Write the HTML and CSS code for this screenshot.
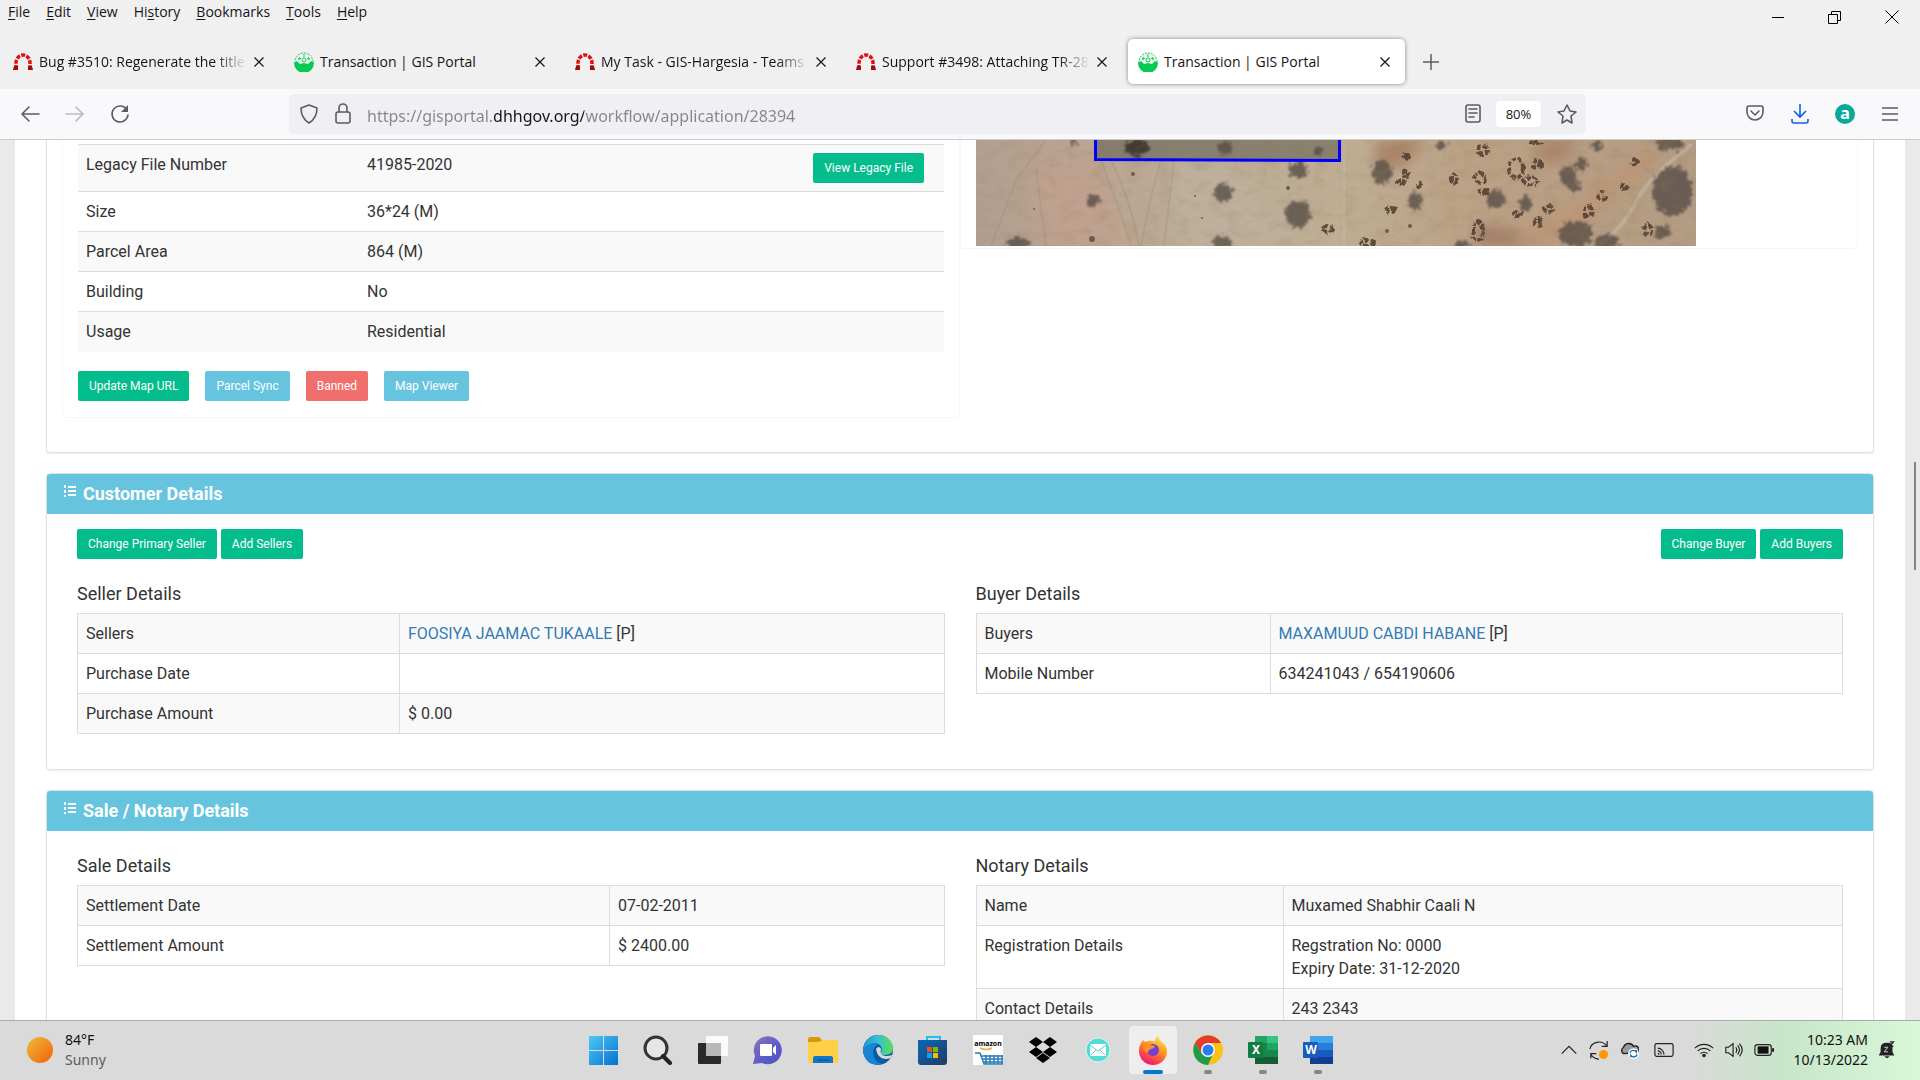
FILE: index.html
```html
<!DOCTYPE html>
<html lang="en">
<head>
    <meta charset="utf-8">
    <meta name="viewport" content="width=device-width, initial-scale=1.0">
    <title>Transaction | GIS Portal</title>
    <link rel="stylesheet" href="styles.css">
</head>
<body>
    <svg class="defs" aria-hidden="true">
        <symbol id="redmine" viewBox="0 0 20 20">
            <path d="M3 17V11A7 8 0 0 1 17 11V17" fill="none" stroke="#d11" stroke-width="3.500" stroke-dasharray="4 1.300"/>
            <path d="M1 14h4v4H0zM15 14h4l1 4h-5z" fill="#a30c0c"/>
        </symbol>
        <symbol id="portal" viewBox="0 0 20 20">
            <circle cx="10" cy="10" r="9" fill="#eafaf0" stroke="#19c65b" stroke-dasharray="2 1"/>
            <path d="M5 5l2 2M15 5l-2 2M10 2v3" stroke="#19c65b" fill="none"/>
            <circle cx="10" cy="8" r="2" fill="none" stroke="#19c65b"/>
            <circle cx="5" cy="7" r="1" fill="#19c65b"/>
            <circle cx="15" cy="7" r="1" fill="#19c65b"/>
            <path d="M0 11l3-2 3 3 4-1 4 1 3-3 3 2a10 10 0 0 1-20 0z" fill="#08ca52"/>
        </symbol>
        <symbol id="close" viewBox="0 0 12 12">
            <path d="M1.500 1.500l9 9m0-9l-9 9" stroke="currentColor" stroke-width="1.200"/>
        </symbol>
        <symbol id="list" viewBox="0 0 12 12">
            <path d="M0 0h2v3H0zM0 5h2v3H0zM0 10h2v2H0zM4 1h8v2H4zM4 5h8v2H4zM4 9h8v2H4z" fill="#fff"/>
        </symbol>
    </svg>

    <header class="chrome">
        <div class="titlebar">
            <nav class="menubar">
                <button><u>F</u>ile</button>
                <button><u>E</u>dit</button>
                <button><u>V</u>iew</button>
                <button>Hi<u>s</u>tory</button>
                <button><u>B</u>ookmarks</button>
                <button><u>T</u>ools</button>
                <button><u>H</u>elp</button>
            </nav>
            <div class="winbuttons">
                <button aria-label="Minimize"><svg width="12" height="12"><path d="M0 6.500h12" stroke="#000"/></svg></button>
                <button aria-label="Restore"><svg width="13" height="13"><path d="M.5 3.500h9v9h-9zM3.500 3V.5h9v9H10" fill="none" stroke="#000"/></svg></button>
                <button aria-label="Close"><svg width="14" height="14"><path d="M.5.5l13 13m0-13l-13 13" stroke="#000"/></svg></button>
            </div>
        </div>
        <div class="tabs">
            <div class="tab">
                <svg class="favicon"><use href="#redmine"/></svg>
                <span class="tabtitle fade">Bug #3510: Regenerate the title</span>
                <button class="tabclose" aria-label="Close tab"><svg><use href="#close"/></svg></button>
            </div>
            <div class="tab">
                <svg class="favicon"><use href="#portal"/></svg>
                <span class="tabtitle">Transaction | GIS Portal</span>
                <button class="tabclose" aria-label="Close tab"><svg><use href="#close"/></svg></button>
            </div>
            <div class="tab">
                <svg class="favicon"><use href="#redmine"/></svg>
                <span class="tabtitle fade">My Task - GIS-Hargesia - Teams</span>
                <button class="tabclose" aria-label="Close tab"><svg><use href="#close"/></svg></button>
            </div>
            <div class="tab">
                <svg class="favicon"><use href="#redmine"/></svg>
                <span class="tabtitle fade">Support #3498: Attaching TR-28</span>
                <button class="tabclose" aria-label="Close tab"><svg><use href="#close"/></svg></button>
            </div>
            <div class="tab active">
                <svg class="favicon"><use href="#portal"/></svg>
                <span class="tabtitle">Transaction | GIS Portal</span>
                <button class="tabclose" aria-label="Close tab"><svg><use href="#close"/></svg></button>
            </div>
            <button class="newtab" aria-label="New tab"><svg width="16" height="16"><path d="M8 0v16M0 8h16" stroke="#5b5b66" stroke-width="1.500"/></svg></button>
        </div>
        <div class="toolbar">
            <div class="navbuttons">
                <button aria-label="Back"><svg width="20" height="20" viewBox="0 0 20 20"><path d="M19 10H2M9 3l-7 7 7 7" class="line"/></svg></button>
                <button aria-label="Forward" class="disabled"><svg width="20" height="20" viewBox="0 0 20 20"><path d="M1 10h17M11 3l7 7-7 7" class="line"/></svg></button>
                <button aria-label="Reload"><svg width="20" height="20" viewBox="0 0 20 20"><path d="M17 6a8 8 0 1 0 1 5" class="line"/><path d="M18 1v7h-7z" fill="#5b5b66"/></svg></button>
            </div>
            <div class="urlbar">
                <svg width="20" height="20" viewBox="0 0 20 20"><path d="M10 1l8 3c0 8-3 12-8 15C5 16 2 12 2 4z" class="line"/></svg>
                <svg width="18" height="22" viewBox="1 0 18 22"><rect x="3" y="9" width="14" height="11" rx="2" class="line"/><path d="M6 9V5a4 4 0 0 1 8 0v4" class="line"/></svg>
                <input class="url" type="text" aria-label="Address" value="https://gisportal.dhhgov.org/workflow/application/28394">
                <button aria-label="Reader view"><svg width="16" height="20" viewBox="0 0 16 20"><rect x="1" y="1" width="14" height="17" rx="2" class="line"/><path d="M4 5h8M4 9h8M4 13h5" class="line"/></svg></button>
                <button class="zoomlevel">80%</button>
                <button aria-label="Bookmark"><svg width="22" height="22" viewBox="0 0 22 22"><path d="M11 2l3 6 6 1-5 4 1 7-5-3-5 3 1-7-5-4 6-1z" class="line"/></svg></button>
            </div>
            <div class="tools">
                <button aria-label="Pocket"><svg width="18" height="18" viewBox="0 0 18 18"><path d="M1 3q0-2 2-2h12q2 0 2 2v4a8 8 0 0 1-16 0z" class="line"/><path d="M5 6l4 4 4-4" class="line"/></svg></button>
                <button aria-label="Downloads"><svg width="18" height="20" viewBox="0 0 18 20"><path d="M9 0v13M3 7l6 6 6-6M1 15v2q0 2 2 2h12q2 0 2-2v-2" fill="none" stroke="#0a60df" stroke-width="1.600"/></svg></button>
                <button aria-label="Extension"><svg width="20" height="20" viewBox="0 0 20 20"><circle cx="10" cy="10" r="10" fill="#08a99b"/><text x="10" y="15" class="exta">a</text></svg></button>
                <button aria-label="Menu"><svg width="16" height="14" viewBox="0 0 16 14"><path d="M0 1h16M0 7h16M0 13h16" class="line"/></svg></button>
            </div>
        </div>
    </header>

    <main class="page">
        <div class="scrollthumb"></div>
        <div class="content">
            <section class="panel first">
                <div class="parcel">
                    <div class="box">
                        <table class="plain">
                            <tr><th>Legacy File Number</th><td>41985-2020 <button class="btn green">View Legacy File</button></td></tr>
                            <tr><th>Size</th><td>36*24 (M)</td></tr>
                            <tr><th>Parcel Area</th><td>864 (M)</td></tr>
                            <tr><th>Building</th><td>No</td></tr>
                            <tr><th>Usage</th><td>Residential</td></tr>
                        </table>
                        <div class="actions">
                            <button class="btn green">Update Map URL</button>
                            <button class="btn blue">Parcel Sync</button>
                            <button class="btn red">Banned</button>
                            <button class="btn blue">Map Viewer</button>
                        </div>
                    </div>
                    <div class="box mapbox">
                        <svg class="map" viewBox="0 0 720 106" role="img" aria-label="Parcel map">
                            <defs>
                                <linearGradient id="soil">
                                    <stop offset="0" stop-color="#b29f90"/>
                                    <stop offset=".15" stop-color="#bba491"/>
                                    <stop offset=".3" stop-color="#bbac97"/>
                                    <stop offset=".5" stop-color="#bfae94"/>
                                    <stop offset=".7" stop-color="#bba085"/>
                                    <stop offset="1" stop-color="#b39c84"/>
                                </linearGradient>
                                <filter id="grain" x="0" y="0" width="1" height="1">
                                    <feTurbulence type="fractalNoise" baseFrequency=".06 .1" numOctaves="4" seed="4"/>
                                    <feColorMatrix values="0 0 0 0 .3  0 0 0 0 .2  0 0 0 0 .1  0 0 0 2 -.9"/>
                                </filter>
                                <filter id="rough" x="-.2" y="-.2" width="1.400" height="1.400">
                                    <feTurbulence type="fractalNoise" baseFrequency=".25" numOctaves="2" seed="8" result="n"/>
                                    <feDisplacementMap in="SourceGraphic" in2="n" scale="12" xChannelSelector="R" yChannelSelector="A"/>
                                    <feGaussianBlur stdDeviation="1.300"/>
                                </filter>
                                <filter id="clump" x="-.2" y="-.2" width="1.400" height="1.400">
                                    <feTurbulence type="fractalNoise" baseFrequency=".2" numOctaves="1" seed="3" result="n"/>
                                    <feDisplacementMap in="SourceGraphic" in2="n" scale="7" xChannelSelector="R" yChannelSelector="A"/>
                                    <feGaussianBlur stdDeviation=".7"/>
                                </filter>
                                <filter id="soft" x="-.2" y="-.5" width="1.400" height="2"><feGaussianBlur stdDeviation="7"/></filter>
                            </defs>
                            <rect width="720" height="106" fill="url(#soil)"/>
                            <g filter="url(#soft)">
                                <path d="M60 30l60-10 30 86H70z" fill="#bfa18f"/>
                                <path d="M400 0h50l-20 25-30 5zM560 0h40l-10 22h-25z" fill="#a98468"/>
                                <path d="M520 106l90-50 60-50 20 10-70 60-40 30z" fill="#bb9778"/>
                                <path d="M500 85l40 5 10 16h-50z" fill="#a27f69"/>
                                <path d="M200 20l60 10 60 76h-120z" fill="#beb09c"/>
                            </g>
                            <path d="M125 20q15 40 30 86M135 20q20 40 28 86M185 20q-12 40-20 86M198 20l-10 86M70 0L40 40 15 106M60 30l10 76" fill="none" stroke="#907b6b" stroke-width="2" opacity=".2"/>
                            <path d="M716 4Q670 40 660 62T625 104" fill="none" stroke="#cbbba7" stroke-width="4" opacity=".5"/>
                            <path d="M368 0v106" stroke="#d2c6b3" opacity=".5"/>
                            <path d="M119 0h245v21l-245-1z" fill="#484c40" opacity=".45"/>
                            <g fill="#544c45" opacity=".78" filter="url(#rough)">
                                <ellipse cx="161" cy="8" rx="12" ry="8" fill="#2f2822"/><ellipse cx="249" cy="8" rx="7" ry="7"/>
                                <ellipse cx="342" cy="11" rx="4" ry="4"/><ellipse cx="98" cy="2" rx="4" ry="3"/>
                                <ellipse cx="322" cy="30" rx="9" ry="8"/><ellipse cx="247" cy="53" rx="9" ry="10"/>
                                <ellipse cx="322" cy="74" rx="13" ry="14"/><ellipse cx="117" cy="60" rx="7" ry="6"/>
                                <ellipse cx="42" cy="103" rx="11" ry="6"/><ellipse cx="246" cy="103" rx="9" ry="7"/>
                                <ellipse cx="406" cy="32" rx="10" ry="12"/><ellipse cx="439" cy="61" rx="7" ry="10"/>
                                <ellipse cx="520" cy="59" rx="9" ry="9"/><ellipse cx="550" cy="63" rx="6" ry="8"/>
                                <ellipse cx="592" cy="36" rx="8" ry="11"/><ellipse cx="605" cy="24" rx="6" ry="7"/>
                                <ellipse cx="697" cy="51" rx="20" ry="25"/><ellipse cx="600" cy="94" rx="17" ry="13"/>
                                <ellipse cx="631" cy="102" rx="12" ry="8"/><ellipse cx="694" cy="4" rx="14" ry="7"/>
                                <ellipse cx="621" cy="6" rx="5" ry="5"/><ellipse cx="466" cy="5" rx="6" ry="4"/>
                                <ellipse cx="686" cy="92" rx="8" ry="7"/><ellipse cx="486" cy="105" rx="8" ry="4"/>
                                <ellipse cx="600" cy="47" rx="6" ry="4"/>
                            </g>
                            <g fill="none" stroke="#4d3a2e" stroke-width="4" stroke-dasharray="5 2" opacity=".85" filter="url(#clump)">
                                <ellipse cx="540" cy="28" rx="7" ry="10"/><ellipse cx="561" cy="24" rx="4" ry="4"/>
                                <ellipse cx="555" cy="41" rx="7" ry="4"/><ellipse cx="507" cy="10" rx="5" ry="4"/>
                                <ellipse cx="478" cy="39" rx="3" ry="4"/><ellipse cx="504" cy="38" rx="5" ry="5"/>
                                <ellipse cx="430" cy="33" rx="2" ry="3"/><ellipse cx="425" cy="42" rx="3" ry="2"/>
                                <ellipse cx="443" cy="44" rx="1" ry="2"/><ellipse cx="626" cy="56" rx="3" ry="4"/>
                                <ellipse cx="612" cy="71" rx="4" ry="5"/><ellipse cx="573" cy="69" rx="4" ry="3"/>
                                <ellipse cx="562" cy="82" rx="3" ry="3"/><ellipse cx="502" cy="91" rx="5" ry="10"/>
                                <ellipse cx="391" cy="103" rx="7" ry="3"/><ellipse cx="415" cy="70" rx="4" ry="2"/>
                                <ellipse cx="541" cy="74" rx="3" ry="2"/><ellipse cx="672" cy="90" rx="4" ry="5"/>
                                <ellipse cx="352" cy="89" rx="5" ry="3"/><ellipse cx="507" cy="52" rx="4" ry="2"/>
                                <ellipse cx="648" cy="47" rx="2" ry="3"/><ellipse cx="659" cy="22" rx="2" ry="2"/>
                                <ellipse cx="430" cy="16" rx="2" ry="2"/><ellipse cx="560" cy="2" rx="5" ry="1"/>
                            </g>
                            <g fill="#58493f" opacity=".8">
                                <circle cx="116" cy="99" r="3"/><circle cx="157" cy="34" r="2"/><circle cx="312" cy="48" r="2"/>
                                <circle cx="411" cy="91" r="2"/><circle cx="434" cy="86" r="2"/><circle cx="58" cy="69" r="1"/>
                                <circle cx="219" cy="56" r="1"/><circle cx="226" cy="78" r="1"/>
                            </g>
                            <rect width="720" height="106" filter="url(#grain)" opacity=".25"/>
                            <path d="M119.500 0v19.500l244 1V0" fill="none" stroke="#00f" stroke-width="3"/>
                        </svg>
                    </div>
                </div>
            </section>

            <section class="panel">
                <h2 class="panelhead"><svg class="listicon"><use href="#list"/></svg>Customer Details</h2>
                <div class="panelbody">
                    <div class="toprow">
                        <div class="group">
                            <button class="btn green">Change Primary Seller</button>
                            <button class="btn green">Add Sellers</button>
                        </div>
                        <div class="group">
                            <button class="btn green">Change Buyer</button>
                            <button class="btn green">Add Buyers</button>
                        </div>
                    </div>
                    <div class="columns">
                        <div>
                            <h3>Seller Details</h3>
                            <table class="bordered sellers">
                                <tr><th>Sellers</th><td><a href="#">FOOSIYA JAAMAC TUKAALE</a> [P]</td></tr>
                                <tr><th>Purchase Date</th><td></td></tr>
                                <tr><th>Purchase Amount</th><td>$ 0.00</td></tr>
                            </table>
                        </div>
                        <div>
                            <h3>Buyer Details</h3>
                            <table class="bordered buyers">
                                <tr><th>Buyers</th><td><a href="#">MAXAMUUD CABDI HABANE</a> [P]</td></tr>
                                <tr><th>Mobile Number</th><td>634241043 / 654190606</td></tr>
                            </table>
                        </div>
                    </div>
                </div>
            </section>

            <section class="panel">
                <h2 class="panelhead"><svg class="listicon"><use href="#list"/></svg>Sale / Notary Details</h2>
                <div class="panelbody">
                    <div class="columns">
                        <div>
                            <h3>Sale Details</h3>
                            <table class="bordered sale">
                                <tr><th>Settlement Date</th><td>07-02-2011</td></tr>
                                <tr><th>Settlement Amount</th><td>$ 2400.00</td></tr>
                            </table>
                        </div>
                        <div>
                            <h3>Notary Details</h3>
                            <table class="bordered notary">
                                <tr><th>Name</th><td>Muxamed Shabhir Caali N</td></tr>
                                <tr><th>Registration Details</th><td>Regstration No: 0000<br>Expiry Date: 31-12-2020</td></tr>
                                <tr><th>Contact Details</th><td>243 2343</td></tr>
                            </table>
                        </div>
                    </div>
                </div>
            </section>
        </div>
    </main>

    <footer class="taskbar">
        <button class="weather">
            <svg width="26" height="26"><defs><linearGradient id="sun" x2="1" y2="1"><stop stop-color="#efbd35"/><stop offset="1" stop-color="#f2600c"/></linearGradient></defs><circle cx="13" cy="13" r="13" fill="url(#sun)"/></svg>
            <span>84°F<br><small>Sunny</small></span>
        </button>
        <div class="apps">
            <button aria-label="Start"><svg viewBox="0 0 30 30"><defs><linearGradient id="win" x2="1" y2="1"><stop stop-color="#4cc9f8"/><stop offset="1" stop-color="#0470cf"/></linearGradient></defs><path d="M1 1h14v14H1zM16 1h14v14H16zM1 16h14v14H1zM16 16h14v14H16z" fill="url(#win)"/></svg></button>
            <button aria-label="Search"><svg viewBox="0 0 30 30"><circle cx="13" cy="13" r="11" fill="#e6e6e6" stroke="#333" stroke-width="3"/><path d="M20 21l7 7" stroke="#222" stroke-width="4" stroke-linecap="round"/></svg></button>
            <button aria-label="Task view"><svg viewBox="0 0 30 30"><rect y="8" width="23" height="21" rx="1" fill="#2b2a28"/><rect x="8" y="1" width="22" height="20" rx="1" fill="#fafafa"/><path d="M8 8h15v13H8z" fill="#b8b8b6"/></svg></button>
            <button aria-label="Chat"><svg viewBox="0 0 30 30"><defs><linearGradient id="chat" x2="1" y2="1"><stop stop-color="#9372b4"/><stop offset=".6" stop-color="#5a5bcc"/><stop offset="1" stop-color="#5054b8"/></linearGradient></defs><path d="M0 29l2-8A14 14 0 1 1 9 28z" fill="url(#chat)"/><rect x="7" y="9" width="12" height="12" rx="1" fill="#fff"/><path d="M20 13l3-3v10l-3-3z" fill="#fff"/></svg></button>
            <button aria-label="File Explorer"><svg viewBox="0 0 30 30"><path d="M0 4q0-2 2-2h9l3 3h16v6H0z" fill="#d99a05"/><path d="M0 7h11l3-2h16v23H0z" fill="#ffcf48"/><path d="M5 28v-5q0-2 2-2h16q2 0 2 2v5z" fill="#0f77c8"/><path d="M9 25h12" stroke="#0a4c8c"/></svg></button>
            <button aria-label="Edge"><svg viewBox="0 0 30 30"><defs><linearGradient id="edge"><stop stop-color="#1b94d7"/><stop offset=".5" stop-color="#35c1d1"/><stop offset="1" stop-color="#5be052"/></linearGradient></defs><circle cx="15" cy="15" r="15" fill="#0c59a4"/><path d="M0 15C2-4 28-5 30 13q0 7-8 7-5 0-4-3 2-3-1-7Q9 5 0 15z" fill="url(#edge)"/><path d="M0 15Q6 6 15 9q-7 5-4 13 2 6 9 7Q2 33 0 15z" fill="#1685d4"/><path d="M13 14q3-4 5 0-2 7 5 7 4 0 6-1l-1 3q-13 4-15-9z" fill="#dadada"/></svg></button>
            <button aria-label="Store"><svg viewBox="0 0 30 30"><path d="M9 6V2h13v4" fill="none" stroke="#1cc0f3" stroke-width="2"/><defs><linearGradient id="store" x2="1" y2="1"><stop stop-color="#086bbb"/><stop offset="1" stop-color="#263861"/></linearGradient></defs><path d="M0 5h29v22q0 3-3 3H3q-3 0-3-3z" fill="url(#store)"/><path d="M9 12h5v5H9z" fill="#f25022"/><path d="M15 12h5v5h-5z" fill="#7fba00"/><path d="M9 18h5v5H9z" fill="#00a4ef"/><path d="M15 18h5v5h-5z" fill="#ffb900"/></svg></button>
            <button aria-label="Amazon"><svg viewBox="0 0 30 30"><path d="M0 0h30v30H0z" fill="#fff"/><text x="15" y="11" class="amz">amazon</text><path d="M7 13q6 3 12 0" fill="none" stroke="#f5a34c" stroke-width="1.500"/><path d="M2 18h5l4 11h19M8 21h22M9 24h21M10 27h20M13 20v9M17 20v9M21 20v9M25 20v9M29 20v9" fill="none" stroke="#2a7db5" stroke-width="1.500"/></svg></button>
            <button aria-label="Dropbox"><svg viewBox="0 0 30 30"><path d="M8 2l7 5-7 5-7-5zM22 2l7 5-7 5-7-5zM8 12l7 5-7 5-7-5zM22 12l7 5-7 5-7-5zM15 18l7 5-7 5-7-5z" fill="#000"/></svg></button>
            <button aria-label="Mail"><svg viewBox="0 0 30 30"><circle cx="15" cy="15" r="12" fill="#52dcd6" stroke="#eee"/><rect x="7" y="9" width="16" height="12" rx="1" fill="#fff"/><path d="M7 10l8 6 8-6M8 20l5-5M22 20l-5-5" fill="none" stroke="#52d0dc"/></svg></button>
            <button aria-label="Firefox" class="current"><svg viewBox="0 0 30 30"><defs><linearGradient id="ff" x1=".8" x2=".3" y2="1"><stop stop-color="#fff24a"/><stop offset=".4" stop-color="#ff9a1f"/><stop offset=".8" stop-color="#fb3a50"/><stop offset="1" stop-color="#e31587"/></linearGradient></defs><path d="M3 8l2-3 2 2 3-1q4-1 7 1 0-4 3-6 1 4 4 6 5 4 5 9A14 14 0 0 1 1 16Q1 11 3 8z" fill="url(#ff)"/><circle cx="15" cy="15" r="6" fill="#7341d3"/><path d="M5 11q4-2 7-1l5 1q-1 3-4 3-3 1-3 4-5-1-5-7z" fill="#ff9023"/></svg></button>
            <button aria-label="Chrome" class="open"><svg viewBox="0 0 30 30"><circle cx="15" cy="15" r="15" fill="#fbc116"/><path d="M2 8A15 15 0 0 1 28 8H15L9 19z" fill="#e33b2e"/><path d="M2 8l7 11 11 0-5 11A15 15 0 0 1 2 8z" fill="#219a4b"/><circle cx="15" cy="15" r="7" fill="#fff"/><circle cx="15" cy="15" r="5.500" fill="#2a7cf0"/></svg></button>
            <button aria-label="Excel" class="open"><svg viewBox="0 0 30 30"><path d="M7 1h23v28H7z" fill="#17864b"/><path d="M7 1h12v7H7z" fill="#21a366"/><path d="M19 1h11v7H19z" fill="#33c481"/><path d="M19 8h11v7H19z" fill="#21a366"/><path d="M7 22h23v7H7z" fill="#185c37"/><rect y="7" width="15" height="16" rx="1" fill="#107c41"/><text x="8" y="19" class="office">X</text></svg></button>
            <button aria-label="Word" class="open"><svg viewBox="0 0 30 30"><path d="M7 1h23v28H7z" fill="#185abd"/><path d="M7 1h23v7H7z" fill="#41a5ee"/><path d="M7 8h23v7H7z" fill="#2b7cd3"/><path d="M7 22h23v7H7z" fill="#103f91"/><rect y="7" width="15" height="16" rx="1" fill="#185abd"/><text x="8" y="19" class="office">W</text></svg></button>
        </div>
        <div class="tray">
            <button aria-label="Show hidden icons"><svg viewBox="0 0 22 22"><path d="M3 15l8-8 8 8" class="ink"/></svg></button>
            <button aria-label="Updates"><svg viewBox="0 0 22 22"><path d="M1 10A10 9 0 0 1 19 6M20 1v6h-6M2 20v-5h6M2 16q4 5 9 5" class="ink"/><circle cx="16" cy="16" r="5" fill="#ff9800"/></svg></button>
            <button aria-label="OneDrive"><svg viewBox="0 0 22 22"><path d="M5 15a4 4 0 0 1 0-7 6 6 0 0 1 11-1 4 4 0 0 1 4 7z" fill="#999" stroke="#222" stroke-width="1.500"/><circle cx="16" cy="15" r="6" fill="#fff"/><path d="M12 14a4 4 0 0 1 7-1v-2M20 16a4 4 0 0 1-7 1v2" fill="none" stroke="#0f6cbd" stroke-width="1.500"/></svg></button>
            <button aria-label="Cast" class="wide"><svg viewBox="0 0 22 22"><rect x="1" y="4" width="20" height="14" rx="2" class="ink"/><path d="M4 9a7 7 0 0 1 7 7M4 12a4 4 0 0 1 4 4" class="ink"/><circle cx="5" cy="15" r="1" fill="#222"/></svg></button>
            <button aria-label="Network" class="network"><svg viewBox="0 0 22 22"><path d="M1 9a14 14 0 0 1 20 0M4 12a10 10 0 0 1 14 0M7 15a6 6 0 0 1 8 0" class="ink"/><circle cx="11" cy="17" r="2" fill="#222"/></svg></button>
            <button aria-label="Volume"><svg viewBox="0 0 22 22"><path d="M2 8h3l5-4v14l-5-4H2zM13 8q2 3 0 6M15 6q4 5 0 10M17 4q6 7 0 14" class="ink"/></svg></button>
            <button aria-label="Battery"><svg viewBox="0 0 22 22"><rect x="1" y="5" width="18" height="12" rx="3" class="ink"/><rect x="4" y="7" width="12" height="8" fill="#111"/><path d="M20 9h2v4h-2z" fill="#111"/></svg></button>
            <button class="clock">10:23 AM<br>10/13/2022</button>
            <button aria-label="Notifications" class="bell"><svg viewBox="0 0 22 22"><path d="M2 17l2-4V9q0-6 7-6t6 6v4l2 4zM8 18h6q-3 4-6 0z" fill="#222"/><path d="M8 8h4l-4 5h4" fill="none" stroke="#ddd"/><path d="M14 2h4l-4 5h4" fill="none" stroke="#222" stroke-width="1.500"/></svg></button>
        </div>
    </footer>
</body>
</html>
```
FILE: styles.css
```css
* {
    box-sizing: border-box;
}

body,
html {
    height: 100%;
    margin: 0;
}

body {
    display: flex;
    flex-direction: column;
    overflow: hidden;
    font-family: Roboto, "Liberation Sans", sans-serif;
    color: #333;
}

button {
    border: 0;
    padding: 0;
    background: none;
    font: inherit;
    color: inherit;
    display: flex;
    align-items: center;
    justify-content: center;
}

.defs {
    position: absolute;
    width: 0;
    height: 0;
}

.line {
    fill: none;
    stroke: #5b5b66;
    stroke-width: 1.6;
    stroke-linecap: round;
    stroke-linejoin: round;
}

/* browser window */
.chrome {
    flex: none;
    background: #f0f0f0;
    color: #15141a;
    font-family: "Open Sans", "Noto Sans", sans-serif;
    font-size: 14px;
    border-bottom: 1px solid #ccc;
}

.titlebar {
    display: flex;
    justify-content: space-between;
    height: 39px;
}

.menubar {
    display: flex;
    align-items: flex-start;
    gap: 16px;
    padding: 2px 8px;
    line-height: 20px;
}

.menubar button {
    display: block;
}

.menubar u {
    text-underline-offset: 2px;
}

.winbuttons {
    display: flex;
}

.winbuttons button {
    width: 57px;
    height: 34px;
}

.tabs {
    display: flex;
    padding-bottom: 5px;
}

.tab {
    flex: 0 1 277px;
    min-width: 0;
    margin-right: 4px;
    height: 45px;
    display: flex;
    align-items: center;
    gap: 6px;
    padding: 0 12px 0 13px;
    border-radius: 5px;
}

.tab.active {
    background: #fff;
    box-shadow: 0 0 4px rgba(0, 0, 0, .45);
    margin-left: 4px;
    padding: 0 14px 0 10px;
}

.favicon {
    flex: none;
    width: 20px;
    height: 20px;
}

.tabtitle {
    flex: 1;
    white-space: nowrap;
}

.tabtitle.fade {
    -webkit-mask-image: linear-gradient(to left, transparent, #000 32px);
    mask-image: linear-gradient(to left, transparent, #000 32px);
}

.tabclose svg {
    width: 12px;
    height: 12px;
}

.newtab {
    width: 44px;
}

.toolbar {
    display: flex;
    align-items: center;
    height: 50px;
    background: #f9f9fb;
}

.navbuttons,
.tools {
    display: flex;
}

.navbuttons {
    padding-left: 7px;
    flex: 0 0 289px;
}

.navbuttons button,
.tools button {
    width: 45px;
    height: 40px;
}

.disabled {
    opacity: .4;
}

.urlbar {
    flex: 1;
    display: flex;
    align-items: center;
    gap: 15px;
    height: 40px;
    padding: 0 8px 0 10px;
    border-radius: 5px;
    background: #f0f0f4;
}

/* the host part of the address is darker than the rest */
.url {
    flex: 1;
    border: 0;
    padding: 3px 0 0;
    outline: 0;
    font: 16px "Noto Sans", sans-serif;
    color: transparent;
    background: linear-gradient(to right, #85858a 127px, #15141a 127px, #15141a 217px, #85858a 217px);
    -webkit-background-clip: text;
    background-clip: text;
}

.zoomlevel {
    width: 45px;
    height: 26px;
    border-radius: 4px;
    background: #fff;
    font-size: 13px;
}

.tools {
    flex: 0 0 334px;
    justify-content: flex-end;
    padding-right: 8px;
}

.exta {
    font: bold 16px "Noto Sans", sans-serif;
    fill: #fff;
    text-anchor: middle;
}

/* portal page */
.page {
    flex: 1;
    min-height: 0;
    position: relative;
    overflow: hidden;
    padding: 0 15px;
    background: #eaeaea;
}

.scrollthumb {
    position: absolute;
    right: 4px;
    top: 322px;
    width: 2px;
    height: 108px;
    background: #858585;
}

.content {
    min-height: 100%;
    padding: 0 31px;
    background: #fff;
}

.panel {
    margin-bottom: 20px;
    border: 1px solid #e0e1e6;
    border-radius: 4px;
    box-shadow: 0 1px 2px rgba(0, 0, 0, .08);
    font-size: 16px;
    line-height: 23px;
}

.panel.first {
    border-top: 0;
    border-radius: 0 0 4px 4px;
    padding: 0 15px 34px;
}

.parcel {
    display: grid;
    grid-template-columns: 1fr 1fr;
    align-items: start;
}

.box {
    padding: 4px 15px 16px;
    border: 1px solid #f7f7f7;
    border-top: 0;
    border-radius: 0 0 4px 4px;
}

.mapbox {
    padding: 0 0 2px 15px;
}

.map {
    display: block;
    width: 720px;
    max-width: 100%;
}

table {
    width: 100%;
    border-collapse: collapse;
    table-layout: fixed;
}

th,
td {
    padding: 8px;
    text-align: left;
    vertical-align: top;
    font-weight: normal;
    height: 40px;
}

tr:nth-child(odd) {
    background: #f9f9f9;
}

.plain th,
.plain td {
    border-top: 1px solid #ddd;
}

.plain th {
    width: 281px;
}

.plain .btn {
    float: right;
    margin-right: 12px;
}

.bordered th,
.bordered td {
    border: 1px solid #ddd;
}

.sellers th {
    width: 322px;
}

.buyers th {
    width: 294px;
}

.sale th {
    width: 532px;
}

.notary th {
    width: 307px;
}

a {
    color: #337ab7;
    text-decoration: none;
}

.btn {
    height: 30px;
    padding: 0 11px;
    border-radius: 2px;
    color: #fff;
    font-size: 12px;
    line-height: 18px;
}

.green {
    background: #04bd8c;
}

.blue {
    background: #67c4df;
}

.red {
    background: #ef6f6c;
}

.actions {
    display: flex;
    gap: 16px;
    margin-top: 19px;
}

.panelhead {
    display: flex;
    align-items: center;
    gap: 7px;
    height: 40px;
    margin: 0;
    padding: 0 17px;
    border-radius: 3px 3px 0 0;
    background: #67c4df;
    color: #fff;
    font-size: 18px;
    font-weight: bold;
}

.listicon {
    width: 12px;
    height: 12px;
    margin-bottom: 6px;
}

.panelbody {
    padding: 5px 30px 35px;
}

.toprow {
    display: flex;
    justify-content: space-between;
    padding: 10px 0 5px;
}

.group {
    display: flex;
    gap: 4px;
}

.columns {
    display: grid;
    grid-template-columns: 1fr 1fr;
    gap: 31px;
}

h3 {
    margin: 0 0 8px;
    padding-top: 18px;
    font-size: 18px;
    font-weight: normal;
    line-height: 23px;
}

/* desktop taskbar */
.taskbar {
    flex: none;
    display: grid;
    grid-template-columns: 1fr auto 1fr;
    align-items: center;
    height: 60px;
    padding-bottom: 2px;
    border-top: 1px solid #aaa;
    background: linear-gradient(to right, #dadada 88%, #c8e6c9 93%, #d9f8d8);
    color: #111;
    font: 14px/20px "Noto Sans", sans-serif;
}

.weather {
    justify-self: start;
    gap: 12px;
    padding-left: 27px;
    text-align: left;
}

.weather small {
    font-size: 14px;
    color: #5c5c5c;
}

.apps {
    display: flex;
    gap: 7px;
}

.apps button {
    position: relative;
    width: 48px;
    height: 48px;
    border-radius: 4px;
}

.apps svg {
    width: 30px;
    height: 30px;
}

.apps .current {
    background: #eee;
}

.open::after,
.current::after {
    content: "";
    position: absolute;
    bottom: 0;
    width: 8px;
    height: 4px;
    border-radius: 2px;
    background: #858585;
}

.current::after {
    width: 20px;
    background: #0078d4;
}

.amz {
    font: bold 7px "Noto Sans", sans-serif;
    text-anchor: middle;
}

.office {
    font: bold 12px "Noto Sans", sans-serif;
    fill: #fff;
    text-anchor: middle;
}

.tray {
    display: flex;
    align-items: center;
    justify-content: flex-end;
    padding-right: 22px;
}

.tray button {
    width: 30px;
}

.tray .wide {
    width: 40px;
}

.tray .network {
    margin-left: 5px;
}

.tray svg {
    width: 20px;
    height: 20px;
}

.ink {
    fill: none;
    stroke: #222;
    stroke-width: 1.3;
}

.tray .clock {
    width: auto;
    display: block;
    margin-left: 15px;
    text-align: right;
}

.tray .bell {
    width: 22px;
    margin-left: 8px;
}
```
